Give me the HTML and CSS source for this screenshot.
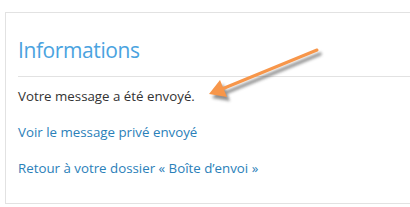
FILE: index.html
```html
<!DOCTYPE html>
<html lang="fr">
<head>
    <meta charset="UTF-8">
    <title>Informations</title>
    <link rel="stylesheet" href="styles.css">
</head>
<body>
    <div class="panneau">
        <h2 class="titre">Informations</h2>
        <div class="contenu">
            <p>Votre message a été envoyé.</p>
            <p><a href="#">Voir le message privé envoyé</a></p>
            <p><a href="#">Retour à votre dossier « Boîte d’envoi »</a></p>
        </div>
    </div>

    <!-- flèche d'annotation -->
    <svg class="fleche" width="410" height="207" viewBox="0 0 410 207">
        <defs>
            <filter id="ombre" x="-20%" y="-50%" width="140%" height="200%">
                <feGaussianBlur stdDeviation="1.6"/>
            </filter>
        </defs>
        <g fill="#444" stroke="#444" opacity="0.6" filter="url(#ombre)" transform="translate(3,4)">
            <line x1="317" y1="50" x2="222" y2="89" stroke-width="3.5" stroke-linecap="round"/>
            <polygon points="209,94 220,80 227,97" stroke="none"/>
        </g>
        <line x1="317" y1="50" x2="222" y2="89" stroke="#f7964a" stroke-width="3" stroke-linecap="round"/>
        <polygon points="209,94 220,80 227,97" fill="#f7964a"/>
    </svg>
</body>
</html>
```

FILE: styles.css
```css
body {
    margin: 0;
    background: #fff;
    font-family: 'Open Sans', sans-serif;
    color: #333;
}

.panneau {
    margin: 12px 0 0 5px;
    padding: 22px 0 26px 12px;
    border: 1px solid #e2e2e2;
    border-right: none;
}

.titre {
    margin: 0;
    padding-bottom: 11px;
    border-bottom: 1px solid #e2e2e2;
    font-size: 21px;
    font-weight: normal;
    letter-spacing: -0.4px;
    line-height: 30px;
    color: #4aa3df;
}

.contenu {
    display: flex;
    flex-direction: column;
    gap: 18px;
    padding-top: 10px;
}

.contenu p {
    margin: 0;
    font-size: 13.3px;
    line-height: 18px;
}

.contenu a {
    color: #2a80b9;
    text-decoration: none;
}

.fleche {
    position: absolute;
    top: 0;
    left: 0;
}
```
